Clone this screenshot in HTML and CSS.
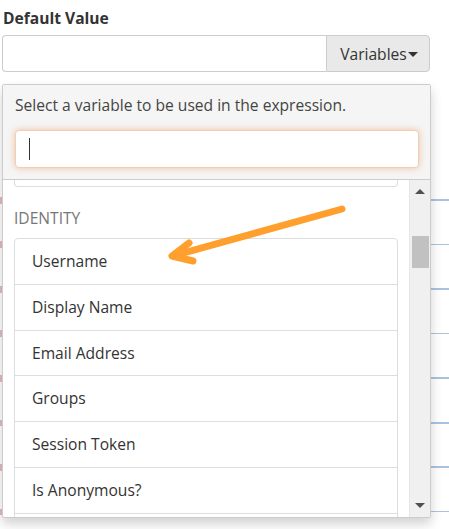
FILE: index.html
```html
<!DOCTYPE html>
<html>
<head>
<meta charset="utf-8">
<link rel="stylesheet" href="styles.css">
</head>
<body>
<div class="underlay"></div>
<div class="underlay-left"></div>
<div class="page">
  <div class="field-label">Default Value</div>
  <div class="input-group">
    <div class="ig-input"></div>
    <div class="ig-btn">Variables<span class="caret"></span></div>
  </div>
  <div class="panel">
    <div class="panel-head">
      <div class="hint">Select a variable to be used in the expression.</div>
      <div class="search"><span class="cursor"></span></div>
    </div>
    <div class="panel-body">
      <div class="scroll">
        <div class="prev-list"></div>
        <div class="group-title">IDENTITY</div>
        <ul class="list">
          <li>Username</li>
          <li>Display Name</li>
          <li>Email Address</li>
          <li>Groups</li>
          <li>Session Token</li>
          <li>Is Anonymous?</li>
          <li>&nbsp;</li>
        </ul>
      </div>
      <div class="scrollbar">
        <span class="arrow up"></span>
        <span class="thumb"></span>
        <span class="spacer"></span>
        <span class="arrow down"></span>
      </div>
    </div>
  </div>
</div>
<svg class="annot" width="449" height="529" viewBox="0 0 449 529">
  <g fill="none" stroke="#ff9a22" stroke-width="7" stroke-linecap="round" stroke-linejoin="round" opacity="0.95">
    <path d="M342 209 L176 255"/>
    <path d="M189 243 L172 256 L193 261"/>
  </g>
</svg>
</body>
</html>
```

FILE: styles.css
```css
html, body {
  margin: 0;
  padding: 0;
  background: #ffffff;
}
body {
  font-family: "Open Sans", "Liberation Sans", sans-serif;
  font-size: 15.6px;
  line-height: 22px;
  color: #333333;
  width: 449px;
  height: 529px;
  overflow: hidden;
  position: relative;
}
.underlay {
  position: absolute;
  left: 431px;
  top: 178px;
  width: 18px;
  height: 351px;
  background: repeating-linear-gradient(to bottom, transparent 0, transparent 21.5px, #a9c3df 21.5px, #a9c3df 23px, transparent 23px, transparent 44.5px);
}
.underlay-left {
  position: absolute;
  left: 0;
  top: 176px;
  width: 2px;
  height: 353px;
  background: repeating-linear-gradient(to bottom, transparent 0, transparent 21px, #e3bcbc 21px, #e3bcbc 28px, transparent 28px, transparent 44.5px);
}
.page {
  position: relative;
  padding: 7px 0 0 2px;
}
.field-label {
  font-weight: 700;
  padding-left: 1px;
  color: #333;
  margin-bottom: 6px;
}
.input-group {
  display: flex;
  width: 428px;
  height: 37px;
  box-sizing: border-box;
}
.ig-input {
  flex: 1;
  border: 1px solid #cccccc;
  border-right: none;
  border-radius: 4px 0 0 4px;
  background: #fff;
}
.ig-btn {
  width: 104px;
  box-sizing: border-box;
  border: 1px solid #cccccc;
  border-radius: 0 4px 4px 0;
  background: #e9e9e9;
  display: flex;
  align-items: center;
  justify-content: center;
  padding-left: 2px;
  color: #333;
}
.caret {
  display: inline-block;
  width: 0;
  height: 0;
  border-left: 5px solid transparent;
  border-right: 5px solid transparent;
  border-top: 5px solid #333;
  margin-left: 1px;
  margin-top: 2px;
}
.panel {
  position: relative;
  margin-top: 12px;
  width: 429px;
  height: 434px;
  box-sizing: border-box;
  border: 1px solid #cccccc;
  border-radius: 2px;
  background: #fff;
  box-shadow: 0 6px 12px rgba(0,0,0,0.18);
  display: flex;
  flex-direction: column;
  overflow: hidden;
}
.panel-head {
  background: #f5f5f5;
  border-bottom: 1px solid #cccccc;
  padding: 9px 11px 11px 12px;
}
.hint {
  color: #444;
  margin-bottom: 14px;
}
.search {
  height: 38px;
  box-sizing: border-box;
  border: 1px solid #f1cdb3;
  border-radius: 4px;
  background: #fff;
  box-shadow: 0 0 7px rgba(236, 150, 90, 0.55);
  display: flex;
  align-items: center;
  padding-left: 13px;
}
.cursor {
  width: 1px;
  height: 22px;
  background: #333;
}
.panel-body {
  flex: 1;
  display: flex;
  min-height: 0;
}
.scroll {
  flex: 1;
  padding: 0 11px 0 11px;
  overflow: hidden;
}
.prev-list {
  height: 6px;
  border: 1px solid #dddddd;
  border-top: none;
  border-radius: 0 0 4px 4px;
}
.group-title {
  color: #777777;
  margin-top: 20px;
  margin-bottom: 9px;
}
.list {
  list-style: none;
  margin: 0;
  padding: 0;
}
.list li {
  border: 1px solid #dddddd;
  margin-bottom: -1px;
  padding: 11px 17px 11.75px 17px;
  color: #333;
}
.list li:first-child {
  border-radius: 4px 4px 0 0;
}
.scrollbar {
  width: 20px;
  background: #f0f0f0;
  border-left: 1px solid #e6e6e6;
  display: flex;
  flex-direction: column;
  align-items: center;
}
.arrow {
  width: 0;
  height: 0;
  border-left: 5px solid transparent;
  border-right: 5px solid transparent;
}
.arrow.up {
  border-bottom: 5px solid #505050;
  margin-top: 9px;
}
.arrow.down {
  border-top: 5px solid #505050;
  margin-bottom: 9px;
}
.thumb {
  width: 17px;
  height: 32px;
  background: #c1c1c1;
  margin-top: 42px;
}
.spacer {
  flex: 1;
}
.annot {
  position: absolute;
  left: 0;
  top: 0;
  pointer-events: none;
}
```
